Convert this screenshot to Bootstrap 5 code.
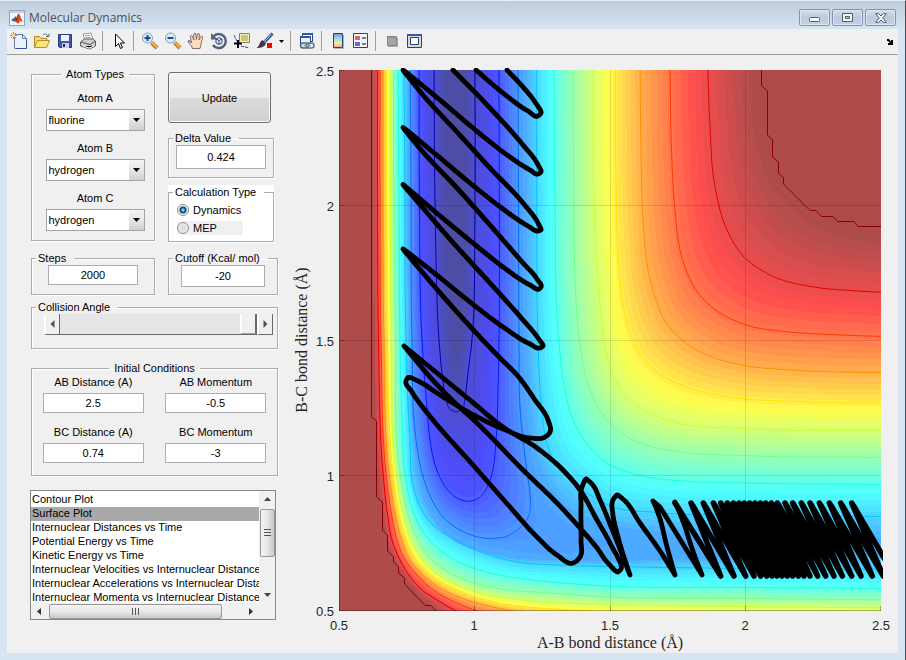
<!DOCTYPE html>
<html lang="en">
<head>
<meta charset="utf-8">
<meta name="viewport" content="width=device-width, initial-scale=1">
<title>Molecular Dynamics</title>
<link href="https://cdn.jsdelivr.net/npm/bootstrap@5.3.0/dist/css/bootstrap.min.css" rel="stylesheet">
<style>
body{background:#d7e4f2;font:11px/14px "Liberation Sans",Arial,sans-serif;color:#000}
.app-frame{min-height:100vh;padding:0 7px 7px;border-top:1px solid #e6edf4;border-right:1px solid #4a4f57;background:linear-gradient(#bfccda,#d7e4f2 28px)}
.title-bar{height:28px;padding:5px 2px 0 2px;color:#4b5057;font:12px/16px "Open Sans","Noto Sans",sans-serif}
.win-set{gap:2px}
.win-btn{width:31px;height:17px;padding:0;border:1px solid #8393ad;border-radius:2px;background:linear-gradient(#d3dfec,#bccbdc 50%,#c3d1e1);box-shadow:inset 0 0 0 1px #dce6f1;line-height:0}
.tool-strip{height:26px;background:#f0f0f0;border-bottom:1px solid #9d9d9d}
.tool{width:23px;height:23px;padding:0;border:0;background:none;line-height:0;flex:none}
.tool svg{width:18px;height:18px}
.tool-caret{width:11px}
.tool-sep{width:8px;height:22px;flex:none;border-left:3px solid transparent;padding-top:2px}
.tool-sep::before{content:"";display:block;height:20px;width:1px;background:#a0a0a0}
.client{background:#f0f0f0}
.side{width:283px;flex:none;padding:12px 12px 0 24px}
.pair{gap:13px}
.pair-steps{margin-top:8px}
fieldset.group-box{border:1px solid #acacaf;box-shadow:1px 1px 0 #fff,inset 1px 1px 0 #fff;padding:0}
.group-box>legend{float:none;width:auto;font-size:11px;line-height:14px;margin:0 auto 0 4px;padding:0 8px 0 2px;height:14px;white-space:nowrap}
.group-box>legend.mid{margin:0 auto;padding:0 5px}
.c-left{width:124px}.c-right{width:106px}.c-wide{width:110px}
.atoms{height:174px;padding:10px 0 0 4px!important}
.atom-stack{gap:10px}
.delta{height:47px}
.small-box{height:44px}
.collision{height:49px;margin-top:5px}
.initial{height:115px;margin-top:12px}
.second-row{margin-top:12px}
.lbl{display:block;line-height:14px}
.pick{width:99px;height:22px;border:1px solid #a3a5ad;border-radius:0;padding:0 18px 0 2px;font-size:11px;line-height:14px;color:#000;appearance:none;background:url("data:image/svg+xml,%3Csvg xmlns='http://www.w3.org/2000/svg' width='7' height='4'%3E%3Cpath d='M0 0h7L3.5 4z'/%3E%3C/svg%3E") no-repeat right 4px center,linear-gradient(#f4f4f4,#e6e6e6 50%,#cfcfcf) no-repeat right center/15px 100%,#fff}
.entry{border:1px solid #abadb3;background:#fff;border-radius:0;text-align:center;font-size:11px;line-height:14px;height:20px;padding:0;color:#000;min-width:0;width:101px}
.entry.tall{height:24px}
.entry.mid-w{width:90px}
.entry.low-w{width:84px;height:22px}
.update{height:51px;width:103px;margin-top:5px;border:1px solid #707070;border-radius:3px;padding:0;font-size:11px;color:#000;background:linear-gradient(#f2f2f2,#ebebeb 50%,#dcdcdc 50%,#cfcfcf);box-shadow:inset 0 0 0 1px #f8f8f8}
.calc{background:#fff;height:58px;margin-top:7px}
.calc fieldset{height:57px}
.radio{appearance:none;width:12px;height:12px;margin:0;border:1px solid #8e8f8f;border-radius:50%;background:radial-gradient(#d8d8d8,#f6f6f6);flex:none}
.radio:checked{background:radial-gradient(circle,#7fd0ee 0 1px,#1a6b9b 2px,#123f66 3px,#d5dde4 4px,#fff 5px)}
.mep{background:#f0f0f0;width:66px}
.slide-btn{width:16px;height:21px;padding:0;border:0;border-left:2px solid #fff;border-right:1px solid #696969;border-bottom:1px solid #696969;background:#f0f0f0;line-height:0;flex:none}
.slide{appearance:none;height:21px;margin:0;background:#e5e5e5;border-bottom:1px solid #696969;min-width:0}
.slide::-webkit-slider-thumb{appearance:none;width:17px;height:20px;background:#f0f0f0;border-left:2px solid #fff;border-right:2px solid #696969;border-bottom:1px solid #a0a0a0}
.list-frame{border:1px solid #828790;background:#fff;height:130px;margin:14px 2px 0 -1px}
.plots{border:0;width:100%;min-width:0;height:112px;overflow:hidden;padding:2px 0 0;margin:0;background:#fff;color:#000;font-size:11px;outline:0;border-radius:0;scrollbar-width:none}
.plots::-webkit-scrollbar{display:none}
.plots option{height:14px;min-height:0;padding:0 1px;font-size:11px;line-height:14px;color:#000;white-space:nowrap}
.plots option:checked{background:#a9a9a9 linear-gradient(#a9a9a9,#a9a9a9);color:#000}
.bar-v{width:16px;background:#f0f0f0;flex:none}
.bar-h{height:16px;background:#f0f0f0;flex:none;padding-right:16px}
.bar-btn{width:16px;height:16px;padding:0;border:0;background:none;line-height:0;flex:none}
.grip{padding:0;border:1px solid #979797;border-radius:2px;line-height:0}
.bar-v .grip{height:48px;width:15px;margin-top:2px;background:linear-gradient(90deg,#f4f4f4,#e6e6e6 50%,#c8c8c8)}
.bar-h .grip{width:173px;height:15px;margin-left:2px;background:linear-gradient(#f4f4f4,#e8e8e8 50%,#c8c8c8)}
.plot{min-width:0}
.plot svg{display:block;width:100%;height:auto}
.tick{font:13px "Liberation Sans",Arial,sans-serif;fill:#262626}
.axis-name{font:16px "Liberation Serif",serif;fill:#262626}
</style>
<script src="https://cdn.jsdelivr.net/npm/bootstrap@5.3.0/dist/js/bootstrap.bundle.min.js"></script>
</head>
<body>
<div class="app-frame">
<header class="title-bar d-flex align-items-center">
  <svg width="16" height="16" viewBox="0 0 16 16" class="me-1"><path d="M.5.5h15v15H.5z" fill="#f4f6f8" stroke="#8fa3bb"/><path d="M1 1h14v2H1z" fill="#c2d2e4"/><path d="M2 10l3-2 2-2 1 3-2 2-1.500.5z" fill="#2d69a8"/><path d="M6 10c2-1 2-6 3.500-6.500C11 4 12 9 14 12c-2-1-2.500-1-3.500.2L9 14c-1-2-2-1.500-3.500-2.500z" fill="#d9501e"/><path d="M9.500 3.500C8.500 6 8 9 6 10l2 1z" fill="#7b2413"/></svg>
  <span>Molecular Dynamics</span>
  <div class="win-set ms-auto d-flex">
    <button class="win-btn" aria-label="Minimize"><svg width="13" height="9" viewBox="0 0 13 9"><rect x="1.500" y="4.500" width="10" height="4" rx="1" fill="#fff" stroke="#535a68"/></svg></button>
    <button class="win-btn" aria-label="Maximize"><svg width="11" height="9" viewBox="0 0 11 9"><path d="M.5.5h10v8H.5zM3.500 3.500v2h4v-2z" fill="#f4f4f4" fill-rule="evenodd" stroke="#535a68"/></svg></button>
    <button class="win-btn" aria-label="Close"><svg width="12" height="10" viewBox="0 0 12 10"><path d="M.7.700h3L6 3 8.300.700h3L7.700 5l3.600 4.300h-3L6 7 3.700 9.300h-3L4.300 5z" fill="#fff" stroke="#535a68"/></svg></button>
  </div>
</header>
<div class="tool-strip d-flex align-items-start" role="toolbar" aria-label="Figure toolbar">
  <button class="tool" aria-label="New figure"><svg viewBox="0 0 18 18"><path d="M4.500 2.500h8l4 4v10h-12z" fill="#eaf3fd" stroke="#6b80ad"/><path d="M12.500 2.500v4h4z" fill="#fff" stroke="#5a78ad"/><path d="M6 16.500h10.500V8" stroke="#35569a" fill="none"/><path d="M1 1l5 5M6 1L1 6M3.500 0v7M0 3.500h7" stroke="#e8773c"/><circle cx="3.500" cy="3.500" r="1.500" fill="#fbe3a0"/></svg></button>
  <button class="tool" aria-label="Open"><svg viewBox="0 0 18 18"><path d="M1.500 15.500v-11h5l1.500 2h6v3" fill="#f5d96a" stroke="#b08a22"/><path d="M1.500 15.500l3-7h12l-3 7z" fill="#fbe67c" stroke="#b9901f"/><path d="M10 3c2-2 4-1 5 1.500M13 4.500h3v-3" fill="none" stroke="#4a6585"/></svg></button>
  <button class="tool" aria-label="Save"><svg viewBox="0 0 18 18"><path d="M2.500 2.500h13v13h-12l-1-1z" fill="#3f56b5" stroke="#2a3a83"/><path d="M5 3h8v6H5z" fill="#eef3fb"/><path d="M6 11h7v5H6z" fill="#c8cfdd"/><path d="M7 12h2v3H7z" fill="#1c2553"/></svg></button>
  <button class="tool" aria-label="Print"><svg viewBox="0 0 18 18"><path d="M6 8l-2-6 8-1 2 6z" fill="#fff" stroke="#8696aa"/><path d="M6 4l5-.7M6.500 6l5-.700" stroke="#7b9dc7"/><path d="M1.500 10l4-3h8l3 2v5l-6 3-9-3z" fill="#cfcfcf" stroke="#5e5e5e"/><path d="M2 10l9 2.500 5-3" fill="none" stroke="#555"/><path d="M4 14l6 2 5-2" stroke="#fff"/><path d="M12 14h1" stroke="#6b9b1e" stroke-width="2"/></svg></button>
  <span class="tool-sep"></span>
  <button class="tool" aria-label="Edit plot"><svg viewBox="0 0 18 18"><path d="M5.500 2v12.500l3-3 2 5 2-1-2-4.500h4z" fill="#fff" stroke="#000"/></svg></button>
  <span class="tool-sep"></span>
  <button class="tool" aria-label="Zoom in"><svg viewBox="0 0 18 18"><path d="M10.500 10.500l5.500 5.500" stroke="#b37a2b" stroke-width="4"/><path d="M10.500 10l5.500 5.500" stroke="#f2b34e" stroke-width="2"/><circle cx="6.500" cy="6" r="5" fill="#d3f0fa" stroke="#7d9fc4"/><path d="M3.500 6h6M6.500 3v6" stroke="#24429a" stroke-width="2"/></svg></button>
  <button class="tool" aria-label="Zoom out"><svg viewBox="0 0 18 18"><path d="M10.500 10.500l5.500 5.500" stroke="#b37a2b" stroke-width="4"/><path d="M10.500 10l5.500 5.500" stroke="#f2b34e" stroke-width="2"/><circle cx="6.500" cy="6" r="5" fill="#d3f0fa" stroke="#7d9fc4"/><path d="M3.500 6h6" stroke="#24429a" stroke-width="2"/></svg></button>
  <button class="tool" aria-label="Pan"><svg viewBox="0 0 18 18"><path d="M5.500 16.500c0-2-3-4-4.500-7 1-1.500 2.500 0 3.500 1.500L3.300 4.500c.4-1.500 1.700-1.300 2.200 0L6.800 8 6.600 2.500c.5-1.500 1.900-1.300 2.200 0L9.400 7.500l1-5c.5-1.300 1.900-1 2 .2L12 8l1.800-3.500c.9-1 2.100-.4 1.800.8-.6 2.200-1.100 4.700-1.600 7.200l-1 4z" fill="#fbdcc0" stroke="#8a6a62"/><path d="M1 9c1.500-.8 2.700.3 3.500 2M7 2.200c.5-1.200 1.700-1 2 .3M10.700 2.200c.5-1 1.500-.8 1.700.3" fill="none" stroke="#3f62b8"/></svg></button>
  <button class="tool" aria-label="Rotate 3D"><svg viewBox="0 0 18 18"><path d="M3.500 4.500A7 7 0 1 1 3 13" fill="none" stroke="#52617d" stroke-width="2.500"/><path d="M1 1v6.500h6.500z" fill="#52617d"/><path d="M6 7l3-1.500L12 7v4l-3 1.500L6 11zM6 7l3 1.500L12 7M9 8.500v4" fill="#e7eef8" stroke="#35477a"/></svg></button>
  <button class="tool" aria-label="Data cursor"><svg viewBox="0 0 18 18"><path d="M1 3c1 3 2 4 3 6M8 14c3 1 6 1 8 2" fill="none" stroke="#2930dc" stroke-dasharray="3 1"/><path d="M6.500 1.500h10v9h-7l-2 2v-2h-1z" fill="#f6f1b3" stroke="#8d8438"/><path d="M8 4h7M8 6h7M8 8h7" stroke="#9a9560"/><path d="M1 11.500h8M5 8v8" stroke="#000" stroke-width="2"/></svg></button>
  <button class="tool" aria-label="Brush"><svg viewBox="0 0 18 18"><path d="M16.500 1.500L9 9.500" stroke="#2f4a98" stroke-width="3"/><path d="M15.500 2L9 9" stroke="#b4c8ee"/><path d="M6.500 8l3.500 3c-1 4-5 5-9.500 5C4 14 3 10 6.500 8z" fill="#3b3b43"/><path d="M11 11h5v5h-5z" fill="#f00"/></svg></button>
  <button class="tool tool-caret" aria-label="Brush options"><svg class="w-100" viewBox="0 0 11 18"><path d="M3 8h5L5.500 11z"/></svg></button>
  <span class="tool-sep"></span>
  <button class="tool" aria-label="Link plot"><svg viewBox="0 0 18 18"><path d="M4.500 1.500h10v8h-10z" fill="#fff" stroke="#24427e"/><path d="M4 2h11" stroke="#3359b6" stroke-width="2"/><path d="M2.500 4.500h10v7h-10z" fill="#eef3fa" stroke="#24427e"/><path d="M2 5h11" stroke="#3359b6" stroke-width="2"/><rect x="2.500" y="11" width="8" height="5" rx="2.500" fill="#cde" stroke="#526a80" stroke-width="1.500"/><rect x="8" y="11" width="8" height="5" rx="2.500" fill="none" stroke="#64798f" stroke-width="1.500"/><path d="M6 13.500h7" stroke="#8ba1b4" stroke-width="1.500"/></svg></button>
  <span class="tool-sep"></span>
  <button class="tool" aria-label="Insert colorbar"><svg viewBox="0 0 18 18"><defs><linearGradient id="jetbar" x2="0" y2="1"><stop stop-color="#8a86dc"/><stop offset=".4" stop-color="#8fe8ee"/><stop offset=".7" stop-color="#f4ee9a"/><stop offset="1" stop-color="#f0a08c"/></linearGradient></defs><path d="M4.500 1.500h9v14h-9z" fill="url(#jetbar)" stroke="#24427e"/><path d="M14.500 3v13.500H5" fill="none" stroke="#aab2c0"/></svg></button>
  <button class="tool" aria-label="Insert legend"><svg viewBox="0 0 18 18"><path d="M1.500 1.500h14v14h-14z" fill="#f4f6fc" stroke="#24427e"/><path d="M3 4h5v4H3z" fill="#e86161"/><path d="M3 10h5v4H3z" fill="#6464e6"/><path d="M10 6h4M10 12h4" stroke="#000"/></svg></button>
  <span class="tool-sep"></span>
  <button class="tool" aria-label="Hide plot tools"><svg viewBox="0 0 18 18"><path d="M4.500 4.500h9v9h-9z" fill="#a4a4a4" stroke="#848484"/><path d="M4 5h10" stroke="#848484"/><path d="M14.500 6v8.500H5" fill="none" stroke="#a9a9a9"/></svg></button>
  <button class="tool" aria-label="Show plot tools"><svg viewBox="0 0 18 18"><path d="M1.500 2.500h14v13h-14z" fill="#d8d8d0" stroke="#24427e"/><path d="M1 3h15" stroke="#3359b6" stroke-width="2"/><path d="M4.500 5.500h8v7h-8z" fill="#fff" stroke="#24427e"/></svg></button>
  <button class="tool ms-auto" aria-label="Dock figure"><svg viewBox="0 0 18 18"><path d="M9 7h2l2 3V8h2v5h-5v-2h2l-2-2H9z"/></svg></button>
</div>
<main class="client d-flex align-items-start">
<form class="side">
  <div class="pair d-flex">
    <fieldset class="group-box atoms c-left text-center">
      <legend class="mid">Atom Types</legend>
      <div class="atom-stack d-flex flex-column align-items-center">
        <div><label class="lbl" for="atomA">Atom A</label><select id="atomA" class="pick mt-1"><option>fluorine</option><option>hydrogen</option></select></div>
        <div><label class="lbl" for="atomB">Atom B</label><select id="atomB" class="pick mt-1"><option>hydrogen</option><option>fluorine</option></select></div>
        <div><label class="lbl" for="atomC">Atom C</label><select id="atomC" class="pick mt-1"><option>hydrogen</option><option>fluorine</option></select></div>
      </div>
    </fieldset>
    <div class="c-right">
      <button type="button" class="update d-block">Update</button>
      <fieldset class="group-box delta mt-2 text-center"><legend>Delta Value</legend><input class="entry tall mid-w" value="0.424" aria-label="Delta Value"></fieldset>
      <div class="calc"><fieldset class="group-box"><legend>Calculation Type</legend>
        <div class="d-flex flex-column gap-1 ps-2 pt-1">
          <label class="d-flex align-items-center gap-1"><input class="radio" type="radio" name="calc" checked>Dynamics</label>
          <label class="d-flex align-items-center gap-1 mep"><input class="radio" type="radio" name="calc">MEP</label>
        </div></fieldset></div>
    </div>
  </div>
  <div class="pair pair-steps d-flex">
    <fieldset class="group-box small-box c-left text-center"><legend>Steps</legend><input class="entry mid-w" value="2000" aria-label="Steps"></fieldset>
    <fieldset class="group-box small-box c-wide text-center"><legend>Cutoff (Kcal/ mol)</legend><input class="entry low-w" value="-20" aria-label="Cutoff"></fieldset>
  </div>
  <fieldset class="group-box collision"><legend>Collision Angle</legend>
    <div class="d-flex ps-2 pe-1 ms-1">
      <button type="button" class="slide-btn" aria-label="Decrease angle"><svg width="5" height="8"><path d="M4.500 0v8L.5 4z" fill="#505050"/></svg></button>
      <input type="range" class="slide flex-grow-1" min="0" max="180" value="180" aria-label="Collision Angle">
      <button type="button" class="slide-btn" aria-label="Increase angle"><svg width="5" height="8"><path d="M.5 0v8l4-4z" fill="#505050"/></svg></button>
    </div>
  </fieldset>
  <fieldset class="group-box initial text-center"><legend class="mid">Initial Conditions</legend>
    <div class="row g-0">
      <div class="col-6"><label class="lbl" for="abd">AB Distance (A)</label><input id="abd" class="entry mt-1" value="2.5"></div>
      <div class="col-6"><label class="lbl" for="abm">AB Momentum</label><input id="abm" class="entry mt-1" value="-0.5"></div>
    </div>
    <div class="row g-0 second-row">
      <div class="col-6"><label class="lbl" for="bcd">BC Distance (A)</label><input id="bcd" class="entry mt-1" value="0.74"></div>
      <div class="col-6"><label class="lbl" for="bcm">BC Momentum</label><input id="bcm" class="entry mt-1" value="-3"></div>
    </div>
  </fieldset>
  <div class="list-frame d-flex flex-column">
    <div class="d-flex flex-grow-1 overflow-hidden">
      <select class="plots flex-grow-1" size="8" aria-label="Plot type">
        <option>Contour Plot</option><option selected>Surface Plot</option><option>Internuclear Distances vs Time</option><option>Potential Energy vs Time</option><option>Kinetic Energy vs Time</option><option>Internuclear Velocities vs Internuclear Distance</option><option>Internuclear Accelerations vs Internuclear Distance</option><option>Internuclear Momenta vs Internuclear Distance</option>
      </select>
      <div class="bar-v d-flex flex-column align-items-center">
        <button type="button" class="bar-btn" aria-label="Scroll up"><svg width="7" height="4"><path d="M0 4h7L3.500 0z" fill="#444"/></svg></button>
        <button type="button" class="grip" aria-label="Vertical scroll"><svg width="7" height="8"><path d="M0 .5h7M0 3.500h7M0 6.500h7" stroke="#555"/></svg></button>
        <button type="button" class="bar-btn mt-auto" aria-label="Scroll down"><svg width="7" height="4"><path d="M0 0h7L3.500 4z" fill="#444"/></svg></button>
      </div>
    </div>
    <div class="bar-h d-flex align-items-center">
      <button type="button" class="bar-btn" aria-label="Scroll left"><svg width="4" height="7"><path d="M4 0v7L0 3.500z" fill="#333"/></svg></button>
      <button type="button" class="grip" aria-label="Horizontal scroll"><svg width="8" height="7"><path d="M.5 0v7M3.500 0v7M6.500 0v7" stroke="#555"/></svg></button>
      <button type="button" class="bar-btn ms-auto" aria-label="Scroll right"><svg width="4" height="7"><path d="M0 0v7l4-3.500z" fill="#333"/></svg></button>
    </div>
  </div>
</form>
<figure class="plot flex-grow-1 m-0">
<svg viewBox="290 55 608 598" role="img" aria-label="Potential energy surface with trajectory">
  <defs><clipPath id="axesBox"><path d="M339 70h542v541H339z"/></clipPath><clipPath id="pathBox"><path d="M339 68h544v543H339z"/></clipPath></defs>
  <g id="surface" clip-path="url(#axesBox)" shape-rendering="crispEdges"></g>
  <g id="contours" clip-path="url(#axesBox)" fill="none"></g>
  <path d="M474.500 70v541M610.500 70v541M745.500 70v541M339 205.500h542M339 340.500h542M339 475.500h542" stroke="#000" stroke-opacity=".12"/>
  <path d="M339.500 70v541M339 610.500h542M339 70.500h5M339 205.500h5M339 340.500h5M339 475.500h5M474.500 611v-5M610.500 611v-5M745.500 611v-5M880.500 611v-5" stroke="#000" stroke-opacity=".3" fill="none"/>
  <g clip-path="url(#pathBox)" fill="none" stroke="#000" stroke-linejoin="round" stroke-linecap="round"><path id="trajectory" stroke-width="4.800"/><path id="vibration" stroke-width="5.500"/></g>
  <g class="tick" text-anchor="end"><text x="334" y="76">2.5</text><text x="334" y="211">2</text><text x="334" y="346">1.5</text><text x="334" y="481">1</text><text x="334" y="616">0.5</text></g>
  <g class="tick" text-anchor="middle"><text x="339" y="630">0.5</text><text x="474" y="630">1</text><text x="610" y="630">1.5</text><text x="745" y="630">2</text><text x="881" y="630">2.5</text></g>
  <text class="axis-name" text-anchor="middle" x="610" y="648">A-B bond distance (Å)</text>
  <text class="axis-name" text-anchor="middle" transform="translate(307 340) rotate(-90)">B-C bond distance (Å)</text>
</svg>
</figure>
</main>
</div>
<script>
// Each level: energy fraction, repulsive wall [down, across], plateau side [down, across].
var levels = [
 [-.01,[[448,60],[448,200],[451,300],[454,330]],[[454,330],[455,350],[457,353]],[[463,60],[463,200],[461,300],[460,330]],[[460,330],[459,350],[457,353]]],
 [.06,[[434,60],[435,200],[439,340],[442,373],[446,398]],[[446,398],[450,409],[456,412]],[[475,60],[475,200],[472,340],[468,373],[465,397]],[[465,397],[462,409],[456,412]]],
 [.145,[[419,60],[419.500,200],[422,340],[427,407],[430,440],[438,473]],[[438,473],[448,490],[459,499],[468,501.500]],[[499,60],[499,340],[498,390],[496,440],[490,480]],[[490,480],[482,495],[475,500],[468,501.500]]],
 [.23,[[410.500,60],[411,200],[412,340],[416,440],[422,473],[432,500]],[[432,500],[446,520],[466,533],[487,538.500],[506,537]],[[518,60],[518.500,200],[519,340],[520,407],[527,473],[530.500,500]],[[530.500,500],[529,515],[521,527],[506,537]]],
 [.255,[[409,60],[409.500,200],[410.500,340],[414,440],[420,480],[430,508]],[[430,508],[450,533],[490,550],[550,557],[600,555],[640,546]],[[524,60],[524,200],[525,340],[528,407],[536,465],[545,490]],[[545,490],[560,512],[590,530],[640,546]]],
 [.262,[[408,60],[408.500,200],[409.500,340],[413.500,440],[419,480],[429,511]],[[429,511],[450,538],[490,554],[560,560],[700,558],[900,550]],[[526,60],[526,200],[527,340],[530,407],[538,462],[549,486]],[[549,486],[570,510],[610,525],[700,536],[900,541]]],
 [.317,[[404,60],[405,200],[406,340],[410,440],[414,490],[424,514]],[[424,514],[433,525],[457,541],[483,553],[517,562],[557,565],[640,567],[750,568.500],[900,569]],[[536.700,60],[536.700,200],[538,340],[541,400],[548,447],[557,467]],[[557,467],[573,483],[590,495],[610,506],[657,512.500],[743,515.500],[900,516.500]]],
 [.40,[[398,60],[399,200],[400,340],[402,420],[405,473],[418,523]],[[418,523],[430,541],[448,556],[490,573],[533,580],[590,585],[750,587.500],[900,588.500]],[[554,60],[555,200],[558.700,340],[564,385],[573,420],[582,437]],[[582,437],[590,448],[610,465],[640,475.500],[690,481.500],[743,483],[900,484.500]]],
 [.485,[[393.500,60],[394,200],[395.500,340],[400,473],[409,518]],[[409,518],[418,540],[432,560],[450,573],[490,587],[550,593],[610,597],[750,598.500],[900,600]],[[573,60],[574,200],[576,300],[580,345],[590,390],[600,410]],[[600,410],[610,423],[623,434],[643,444],[677,451.500],[743,455.500],[900,457.500]]],
 [.57,[[390.500,60],[390.500,200],[391.500,340],[396,473],[404,518]],[[404,518],[411,541],[423,561],[440,576],[470,590],[523,600],[590,604],[700,606],[900,608]],[[593,60],[594,200],[598,280],[604,340],[610,368],[618,386]],[[618,386],[628,399],[643,410],[677,423],[743,428.500],[900,430.500]]],
 [.65,[[386.700,60],[386.700,200],[387.500,340],[393,473],[400,518]],[[400,518],[407,541],[417,561],[430,574],[457,590],[490,601],[577,610.500],[700,614],[900,618]],[[615,60],[616,180],[618,250],[626,318],[635,345]],[[635,345],[643,358],[657,372],[690,388],[723,396],[797,401.500],[900,403]]],
 [.735,[[383,60],[383,200],[384,340],[389,473],[396,518]],[[396,518],[402,541],[410,560],[422,574],[445,591],[467,600],[507,610],[600,619],[900,626]],[[640,60],[641,150],[643,220],[649,275],[657,303]],[[657,303],[665,322],[678,337],[700,352],[717,359],[747,366],[790,370],[900,373]]],
 [.82,[[380,60],[380,200],[381,340],[386,473],[392,518]],[[392,518],[397,541],[404,558],[416,574],[433,590],[450,600],[477,611],[590,624],[900,634]],[[670,60],[671.500,150],[675,210],[681.500,256],[688,275]],[[688,275],[696,290],[713,308],[743,324],[790,332],[830,334.500],[900,337]]],
 [.905,[[377.500,60],[377.500,200],[378.500,340],[383,473],[388,518]],[[388,518],[392,541],[398,556],[408,574],[422,590],[437,600],[456,611],[580,630],[900,640]],[[707.500,60],[710,127],[715,187],[727,230]],[[727,230],[743,256],[770,275],[817,287.500],[850,290.500],[900,293]]],
 [.985,[[373,60],[373,200],[374,340],[378,473],[383,518]],[[383,518],[387,541],[393,558],[403,576],[413,588],[425,600],[437,611],[570,636],[900,650]],[[749,60],[752,115],[757,145],[770,183]],[[770,183],[787,205],[823,231],[850,238],[900,246]]]
];
// Hermite smoothing through the points; tangents shrink where the line turns back on itself.
function smooth(p){
  var out=[p[0]];
  function tangent(i,L){
    var u=p[Math.max(0,i-1)],v=p[i],w=p[Math.min(p.length-1,i+1)];
    var a=[v[0]-u[0],v[1]-u[1]],b=[w[0]-v[0],w[1]-v[1]],la=Math.hypot(a[0],a[1]),lb=Math.hypot(b[0],b[1]);
    if(!la)return b.map(function(x){return x/lb*L;});
    if(!lb)return a.map(function(x){return x/la*L;});
    // Weight each side by the other's length so the short side sets the direction.
    var q=[a[0]/la/la+b[0]/lb/lb,a[1]/la/la+b[1]/lb/lb],n=Math.hypot(q[0],q[1])||1;
    var c=(a[0]*b[0]+a[1]*b[1])/la/lb,k=c>.3?1:Math.max(.05,(c+1)/2.600);
    var m=Math.min(L,3*Math.min(la,lb));
    return [q[0]/n*m*k,q[1]/n*m*k];
  }
  for(var i=0;i<p.length-1;i++){
    var b=p[i],c=p[i+1],L=Math.hypot(c[0]-b[0],c[1]-b[1]),m=tangent(i,L),n=tangent(i+1,L);
    for(var s=1;s<=12;s++){var t=s/12,t2=t*t,t3=t2*t,h=2*t3-3*t2+1,k=t3-2*t2+t,o=3*t2-2*t3,r=t3-t2;
      out.push([h*b[0]+k*m[0]+o*c[0]+r*n[0],h*b[1]+k*m[1]+o*c[1]+r*n[1]]);}
  }
  return out;
}
function even(p,n){
  var d=[0];for(var i=1;i<p.length;i++)d.push(d[i-1]+Math.hypot(p[i][0]-p[i-1][0],p[i][1]-p[i-1][1]));
  var T=d[d.length-1],o=[],j=1;
  for(i=0;i<=n;i++){var g=T*i/n;while(j<p.length-1&&d[j]<g)j++;var f=(g-d[j-1])/((d[j]-d[j-1])||1);o.push([p[j-1][0]+(p[j][0]-p[j-1][0])*f,p[j-1][1]+(p[j][1]-p[j-1][1])*f]);}
  return o;
}
function branch(down,across){
  var s=smooth(down.concat(across.slice(1))),cut=(down.length-1)*12;
  return even(s.slice(0,cut+1),40).concat(even(s.slice(cut),60));
}
var curves=levels.map(function(l){return {t:l[0],w:branch(l[1],l[2]),p:branch(l[3],l[4])};});
function mix(a,b,f){return a.map(function(q,i){return [q[0]+(b[i][0]-q[0])*f,q[1]+(b[i][1]-q[1])*f];});}
function at(t){for(var i=0;i<curves.length-2&&curves[i+1].t<t;i++);var a=curves[i],b=curves[i+1],f=(t-a.t)/(b.t-a.t);return {w:mix(a.w,b.w,f),p:mix(a.p,b.p,f)};}
function line(p){return p.map(function(q){return q[0].toFixed(1)+' '+q[1].toFixed(1);}).join('L');}
function jet(t,alpha){
  function c(x){x=Math.max(0,Math.min(1,1.5-Math.abs(4*t-x)));return Math.round(255*(x*alpha+1-alpha));}
  return 'rgb('+c(3)+','+c(2)+','+c(1)+')';
}
var svg='<path d="M339 70h542v541H339z" fill="#ae4b4b"/>';
for(var j=63;j>=0;j--){var t=j/64;if(t>.985)continue;var c=at(t);svg+='<path d="M'+line(c.w)+'L'+line(c.p.slice().reverse())+'Z" fill="'+jet(Math.max(0,t-.008),.7)+'"/>';}
document.getElementById('surface').innerHTML=svg;
svg='<path d="M371.500 70V417L376.500 421V497L382.500 502V530L387.500 535V551L393.500 557V562L398.500 567V573L404.500 578V584L425 605.500H431L436 611M761.500 70V85.500L767.500 91V135L772.500 140V157L778.500 162V173L783.500 178V184L810 210.500H816L821.500 216.500H833L837.500 221.500H854L858 226.500H881" stroke="#8b0000"/>';
curves.forEach(function(c,i){if(i==0||i==4||i==5||i==14)return;svg+='<path d="M'+line(c.w)+'M'+line(c.p)+'" stroke="'+jet(c.t,1)+'"/>';});
document.getElementById('contours').innerHTML=svg;
var route=[[507,70],[523,87],[535,102],[541,113],[538,116],[528,111],[503,93],[476,70]];
var route2=[[453,70],[490,108],[523,145],[537,163],[541,172],[538,174],[530,170],[503,152],[473,128],[440,100],[403,70],
 [423,95],[457,132],[490,168],[523,203],[538,223],[541,230],[538,231],[528,226],[503,209],[470,183],[433,152],[403,127.500],
 [423,152],[457,188],[490,225],[523,263],[537,279],[541,287],[539,289],[530,285],[503,267],[473,243],[433,210],[403,184.500],
 [423,208],[457,247],[490,283],[523,320],[538,338],[543,346],[540,348],[530,344],[503,327],[470,302],[433,272],[403,249],
 [423,273],[457,312],[500,358],[517,375],[535,400],[548,420],[550,432],[545,437],[530,438],[503,429],[470,413],[437,393],[420,382],[408,377.500],
 [406,381],[412,392],[433,420],[473,465],[510,507],[537,537],[557,555],[573,563],[580,557],[581,540],[581,507],[582,487],[586,479],[592,484],[600,500],[610,524],[620,549],[630,575],
 [622,551],[617,533],[613,515],[613,500],[617,495],[624,500],[640,523],[660,551],[675,575]];
var route3=[[404,346],[437,373],[470,400],[503,427],[537,448],[563,470],[580,490],[597,520],[610,543],[621,569],[618,572],[607,562],[597,548],[580,528],[557,503],[523,470],[477,423],[450,398],[430,377],[404,346]];
document.getElementById('trajectory').setAttribute('d','M'+line(smooth(route))+'M'+line(smooth(route2))+'M'+line(smooth(route3))+'M675 575Q666 545 663 530T653 501L660 507L702 575Q692 550 688 536T675 502');
var tops=[255,303,340,370,392,412,430,447,463,479,495,511,527,544,562,585,608,634,660,688,718,752,785];
var feet=[392,432,467,492,512,530,546,561,576,592,608,625,642,660,683,707,732,757,785,813,847,880,914];
var zig='M';
tops.forEach(function(x,i){var a=590+x/3,b=590+feet[i]/3;zig+=(i?'L':'')+a+' 503L'+(a+2)+' 506L'+b+' 576';});
document.getElementById('vibration').setAttribute('d',zig);
</script>
</body>
</html>
